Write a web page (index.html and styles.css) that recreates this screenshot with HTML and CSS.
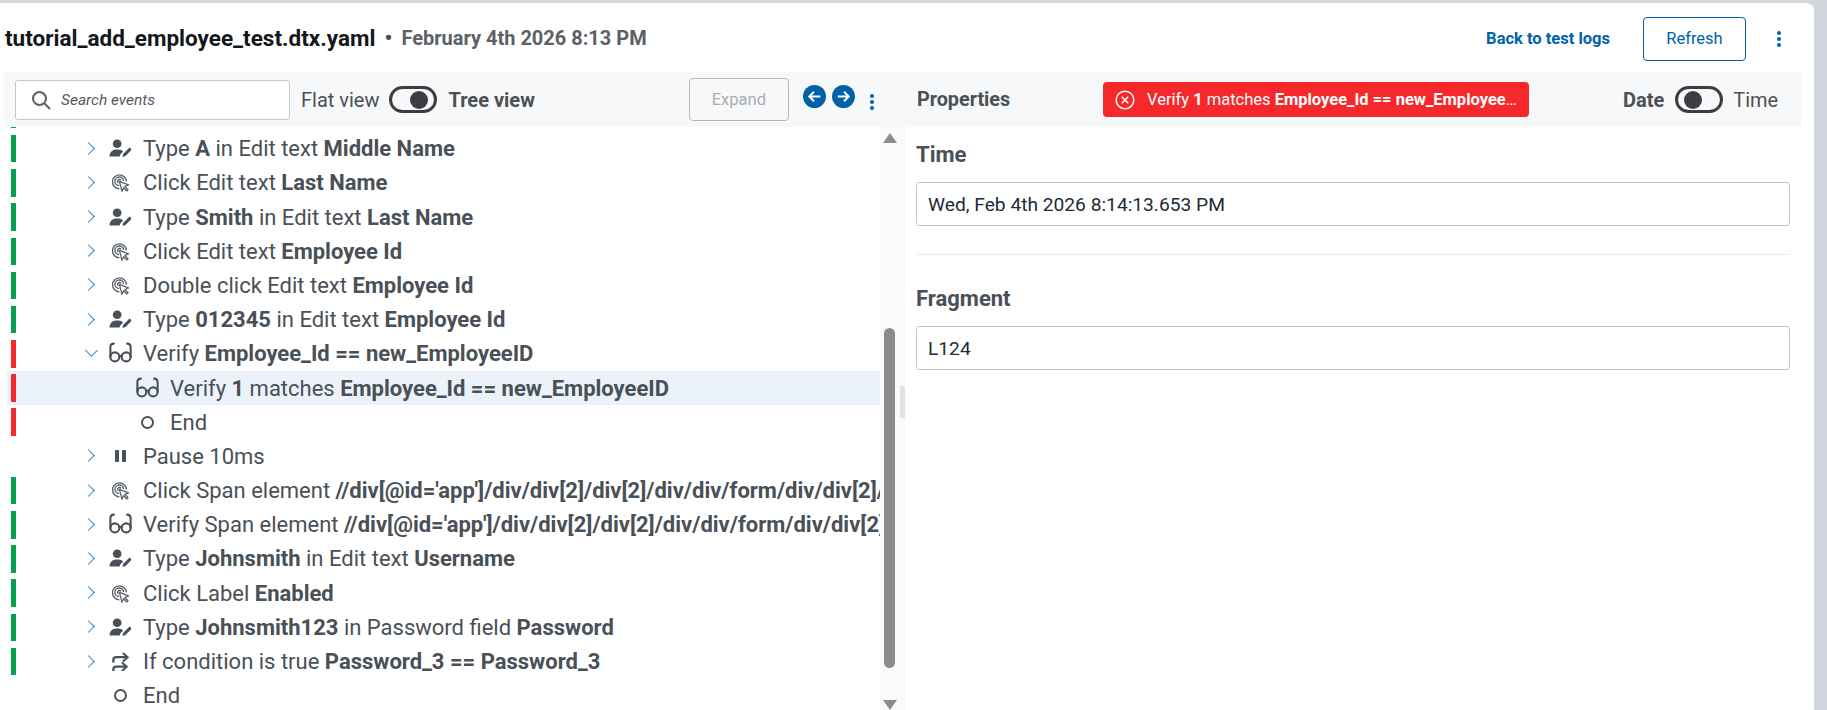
FILE: index.html
```html
<!DOCTYPE html>
<html lang="en">
<head>
<meta charset="utf-8">
<title>tutorial_add_employee_test.dtx.yaml</title>
<link rel="stylesheet" href="styles.css">
</head>
<body>
<svg class="defs" width="0" height="0" aria-hidden="true">
  <symbol id="i-type" viewBox="0 0 24 20">
    <circle cx="8.500" cy="5" r="4.600" fill="currentColor"/>
    <path d="M0.500 18.500c0-4.500 3-7.500 6.500-7.500h3c2 0 3.600.8 4.800 2.100l-2.800 2.900-1 2.500z" fill="currentColor"/>
    <path d="M14 18.800l.7-3 6-6.100c.5-.5 1.200-.5 1.700 0l.6.6c.5.5.5 1.200 0 1.700l-6 6.100z" fill="currentColor"/>
  </symbol>
  <symbol id="i-click" viewBox="0 0 18 18" fill="none" stroke="currentColor">
    <path d="M8 15A6.600 6.600 0 1 1 14.600 8" stroke-width="1.300"/>
    <path d="M7.700 12A4.100 4.100 0 1 1 11.900 7.600" stroke-width="1.300"/>
    <path d="M7 9.300A1.700 1.700 0 1 1 9.400 7" stroke-width="1.300"/>
    <path d="M8 8l8.600 3.300-3.500 1.500 3 3-1.200 1.200-3-3-1.500 3.400z" fill="#fff" stroke-width="1.200" stroke-linejoin="round"/>
  </symbol>
  <symbol id="i-glasses" viewBox="0 0 22 20" fill="none" stroke="currentColor" stroke-width="2" stroke-linecap="round">
    <circle cx="5.600" cy="14.200" r="4.300"/>
    <circle cx="16.400" cy="14.200" r="4.300"/>
    <path d="M9.800 13.500c.8-.5 1.600-.5 2.400 0M1.300 14V5c0-2 1-3.500 3.400-3.500M20.700 14V5c0-2-1-3.500-3.400-3.500"/>
  </symbol>
  <symbol id="i-flow" viewBox="0 0 20 20" fill="none" stroke="currentColor" stroke-width="2.400">
    <path d="M2.500 11V8.500c0-2 1-3 3-3H16"/>
    <path d="M2.500 20v-1.500c0-2 1-3 3-3H15"/>
    <path d="M12.500 1 17.500 5.500 12.500 10M11.500 11 16.500 15.500 11.500 20" stroke-width="2.200"/>
  </symbol>
</svg>
<main class="card">
  <header class="head">
    <div class="crumb">
      <h1 class="file">tutorial_add_employee_test.dtx.yaml</h1>
      <span class="dot">•</span>
      <span class="stamp">February 4th 2026 8:13 PM</span>
    </div>
    <div class="head-actions">
      <a class="back">Back to test logs</a>
      <button class="refresh">Refresh</button>
      <span class="kebab kebab-head"><i></i><i></i><i></i></span>
    </div>
  </header>

  <section class="bar">
    <div class="bar-left">
      <label class="search">
        <svg class="search-ic" viewBox="0 0 20 20" fill="none" stroke="#5f6368" stroke-width="2.100"><circle cx="8.500" cy="8.500" r="6.500"/><path d="M13.500 13.500 19 19"/></svg>
        <span class="search-ph">Search events</span>
      </label>
      <span class="opt">Flat view</span>
      <span class="toggle on"><i></i></span>
      <span class="opt strong">Tree view</span>
      <button class="expand">Expand</button>
      <span class="round"><svg viewBox="0 0 24 24" fill="none" stroke="#fff" stroke-width="2"><path d="M18 12H6.500M11.500 7l-5 5 5 5"/></svg></span>
      <span class="round"><svg viewBox="0 0 24 24" fill="none" stroke="#fff" stroke-width="2"><path d="M6 12h11.500M12.500 7l5 5-5 5"/></svg></span>
      <span class="kebab kebab-bar"><i></i><i></i><i></i></span>
    </div>
    <div class="bar-right">
      <span class="props">Properties</span>
      <div class="alert">
        <svg class="alert-ic" viewBox="0 0 20 20" fill="none" stroke="#fff" stroke-width="1.500"><circle cx="10" cy="10" r="8.800"/><path d="M6.800 6.800l6.400 6.400M13.200 6.800l-6.400 6.400"/></svg>
        <span class="alert-text">Verify <b>1</b> matches <b>Employee_Id == new_EmployeeID</b></span>
      </div>
      <span class="opt strong date">Date</span>
      <span class="toggle"><i></i></span>
      <span class="opt">Time</span>
    </div>
  </section>

  <div class="panes">
    <div class="tree-wrap">
      <div class="tree">
        <div class="stub"></div>
        <div class="row ok"><span class="mark"></span><span class="chev"></span><svg class="ic"><use href="#i-type"/></svg><span class="txt">Type <b>A</b> in Edit text <b>Middle Name</b></span></div>
        <div class="row ok"><span class="mark"></span><span class="chev"></span><svg class="ic ic-click"><use href="#i-click"/></svg><span class="txt">Click Edit text <b>Last Name</b></span></div>
        <div class="row ok"><span class="mark"></span><span class="chev"></span><svg class="ic"><use href="#i-type"/></svg><span class="txt">Type <b>Smith</b> in Edit text <b>Last Name</b></span></div>
        <div class="row ok"><span class="mark"></span><span class="chev"></span><svg class="ic ic-click"><use href="#i-click"/></svg><span class="txt">Click Edit text <b>Employee Id</b></span></div>
        <div class="row ok"><span class="mark"></span><span class="chev"></span><svg class="ic ic-click"><use href="#i-click"/></svg><span class="txt">Double click Edit text <b>Employee Id</b></span></div>
        <div class="row ok"><span class="mark"></span><span class="chev"></span><svg class="ic"><use href="#i-type"/></svg><span class="txt">Type <b>012345</b> in Edit text <b>Employee Id</b></span></div>
        <div class="row bad"><span class="mark"></span><span class="chev open"></span><svg class="ic ic-glass"><use href="#i-glasses"/></svg><span class="txt">Verify <b>Employee_Id == new_EmployeeID</b></span></div>
        <div class="row bad sel child"><span class="mark"></span><span class="chev none"></span><svg class="ic ic-glass"><use href="#i-glasses"/></svg><span class="txt">Verify <b>1</b> matches <b>Employee_Id == new_EmployeeID</b></span></div>
        <div class="row bad child"><span class="mark"></span><span class="chev none"></span><span class="ic ic-end"><i></i></span><span class="txt">End</span></div>
        <div class="row"><span class="mark"></span><span class="chev"></span><span class="ic ic-pause"><i></i><i></i></span><span class="txt">Pause 10ms</span></div>
        <div class="row ok"><span class="mark"></span><span class="chev"></span><svg class="ic ic-click"><use href="#i-click"/></svg><span class="txt">Click Span element <b>//div[@id='app']/div/div[2]/div[2]/div/div/form/div/div[2]/</b></span></div>
        <div class="row ok"><span class="mark"></span><span class="chev"></span><svg class="ic ic-glass"><use href="#i-glasses"/></svg><span class="txt">Verify Span element <b>//div[@id='app']/div/div[2]/div[2]/div/div/form/div/div[2]</b></span></div>
        <div class="row ok"><span class="mark"></span><span class="chev"></span><svg class="ic"><use href="#i-type"/></svg><span class="txt">Type <b>Johnsmith</b> in Edit text <b>Username</b></span></div>
        <div class="row ok"><span class="mark"></span><span class="chev"></span><svg class="ic ic-click"><use href="#i-click"/></svg><span class="txt">Click Label <b>Enabled</b></span></div>
        <div class="row ok"><span class="mark"></span><span class="chev"></span><svg class="ic"><use href="#i-type"/></svg><span class="txt">Type <b>Johnsmith123</b> in Password field <b>Password</b></span></div>
        <div class="row ok"><span class="mark"></span><span class="chev"></span><svg class="ic ic-flow"><use href="#i-flow"/></svg><span class="txt">If condition is true <b>Password_3 == Password_3</b></span></div>
        <div class="row"><span class="mark"></span><span class="chev none"></span><span class="ic ic-end"><i></i></span><span class="txt">End</span></div>
      </div>
      <div class="scroll">
        <span class="arrow up"></span>
        <span class="thumb"></span>
        <span class="arrow down"></span>
      </div>
    </div>
    <div class="split"><span class="grip"></span></div>
    <div class="detail">
      <h2 class="lbl">Time</h2>
      <div class="field">Wed, Feb 4th 2026 8:14:13.653 PM</div>
      <hr class="rule">
      <h2 class="lbl">Fragment</h2>
      <div class="field">L124</div>
    </div>
  </div>
</main>
</body>
</html>
```

FILE: styles.css
```css
* { box-sizing: border-box; }
html, body { margin: 0; height: 100%; }
body {
  background: #d2d7dd;
  padding: 3px 13px 0 0;
  height: 710px;
  overflow: hidden;
  font-family: Roboto, "Liberation Sans", sans-serif;
  color: #495057;
}
.defs { position: absolute; }
.card {
  background: #fff;
  height: 707px;
  border-top-right-radius: 8px;
  display: flex;
  flex-direction: column;
  overflow: hidden;
}
.head {
  height: 69px;
  flex: none;
  display: flex;
  align-items: center;
  justify-content: space-between;
  padding: 0 0 0 5px;
}
.crumb { display: flex; align-items: center; gap: 9px; }
.file { margin: 0; font-size: 22.500px; font-weight: 700; color: #14171a; }
.dot { font-size: 22px; color: #495057; font-weight: 700; }
.stamp { font-size: 20px; font-weight: 700; color: #5c6168; }
.head-actions { display: flex; align-items: center; margin-top: 2px; }
.back { font-size: 16.500px; font-weight: 700; color: #0062a8; margin-right: 33px; }
.refresh {
  width: 103px;
  height: 44px;
  background: #fff;
  border: 1px solid #0062a8;
  border-radius: 4px;
  color: #0062a8;
  font: 400 16.500px Roboto, sans-serif;
  margin-right: 31px;
}
.kebab { display: flex; flex-direction: column; gap: 2px; align-items: center; width: 4px; }
.kebab i { width: 4px; height: 4px; border-radius: 50%; background: #0062a8; display: block; }
.kebab-head { margin-right: 33px; }
.bar {
  height: 55px;
  flex: none;
  margin: 0 13px 0 4px;
  background: #f7f8fa;
  display: flex;
}
.bar-left { width: 901px; flex: none; display: flex; align-items: center; position: relative; padding-left: 11px; }
.search {
  width: 275px;
  height: 40px;
  background: #fff;
  border: 1px solid #c4c8cc;
  border-radius: 3px;
  display: flex;
  align-items: center;
  padding-left: 15px;
  margin-right: 11px;
  flex: none;
}
.search-ic { width: 20px; height: 20px; margin-right: 10px; }
.search-ph { font-style: italic; font-size: 15.500px; color: #55595f; }
.opt { font-size: 20px; color: #4d4f53; }
.opt.strong { font-weight: 700; }
.date { margin-right: 2px; }
.toggle {
  width: 48px;
  height: 27px;
  border: 3px solid #3b3d40;
  border-radius: 14px;
  display: flex;
  align-items: center;
  padding: 0 6px;
  margin: 0 10px 0 9px;
  flex: none;
}
.toggle.on { margin-right: 12px; justify-content: flex-end; }
.toggle i { width: 18px; height: 18px; background: #3b3d40; border-radius: 50%; display: block; }
.expand {
  width: 100px;
  height: 43px;
  background: transparent;
  border: 1px solid #b4b8bc;
  border-radius: 4px;
  color: #a9adb2;
  font: 400 16.500px Roboto, sans-serif;
  margin-left: 154px;
  margin-right: 14px;
}
.round { width: 23px; height: 23px; border-radius: 50%; background: #0062a8; margin: 0 6px 7px 0; flex: none; display: block; }
.round svg { width: 23px; height: 23px; display: block; }
.kebab-bar { margin: 5px 0 0 9px; }
.bar-right { flex: 1; display: flex; align-items: center; padding-left: 12px; }
.props { font-size: 19.800px; font-weight: 700; color: #495057; width: 186px; flex: none; }
.alert {
  width: 426px;
  height: 35px;
  background: #f7282c;
  border-radius: 4px;
  display: flex;
  align-items: center;
  padding: 0 12px 0 12px;
  color: #fff;
  font-size: 16.500px;
  flex: none;
  margin-right: 94px;
}
.alert-ic { width: 20px; height: 20px; flex: none; margin-right: 12px; }
.alert-text { white-space: nowrap; overflow: hidden; text-overflow: ellipsis; }
.panes { flex: 1; min-height: 0; display: flex; }
.tree-wrap { width: 900px; flex: none; display: flex; overflow: hidden; }
.tree { width: 880px; flex: none; overflow: hidden; padding-left: 7px; }
.stub { height: 4.600px; position: relative; }
.stub::before { content: ""; display: block; width: 5px; height: 1px; margin-left: 4px; background: #05a050; }
.row { height: 34.200px; display: flex; align-items: center; white-space: nowrap; }
.row.sel { background: #ebf2fa; }
.mark { width: 5px; height: 27.500px; margin-left: 4px; flex: none; }
.ok .mark { background: #05a050; }
.bad .mark { background: #f7282c; }
.chev { width: 7px; height: 12px; margin-left: 71px; margin-right: 15px; flex: none; position: relative; top: -1px; }
.chev::before {
  content: "";
  position: absolute;
  left: -3px; top: 2px;
  width: 8px; height: 8px;
  border-top: 1.500px solid #2f83c5;
  border-right: 1.500px solid #2f83c5;
  transform: rotate(45deg);
}
.chev.open::before { transform: rotate(135deg); left: 0; top: -1px; }
.chev.none::before { display: none; }
.child .chev { margin-right: 42px; }
.ic { width: 23px; height: 19px; flex: none; margin-right: 11px; color: #495057; display: block; }
.ic-click { color: #5a6068; }
.ic-glass { height: 21px; position: relative; top: -1px; }
.ic-end { display: flex; align-items: center; justify-content: center; }
.ic-end i { width: 13px; height: 13px; border: 2.500px solid #495057; border-radius: 50%; display: block; }
.ic-pause { display: flex; align-items: center; justify-content: center; gap: 3px; }
.ic-pause i { width: 4px; height: 12px; border-radius: 1px; background: #495057; display: block; }
.txt { font-size: 22px; color: #495057; }
.txt b { font-weight: 700; }
.scroll { width: 20px; flex: none; background: #fafafa; position: relative; }
.arrow { position: absolute; left: 3px; width: 0; height: 0; border-left: 7px solid transparent; border-right: 7px solid transparent; }
.arrow.up { top: 6px; border-bottom: 10px solid #8c8c8c; }
.arrow.down { top: 573px; border-top: 10px solid #8c8c8c; }
.thumb { position: absolute; left: 4px; top: 201px; width: 11px; height: 340px; background: #8c8c8c; border-radius: 6px; }
.split { width: 5px; flex: none; background: #f9fafa; position: relative; }
.grip { position: absolute; left: 0; top: 259px; width: 5px; height: 32px; background: #dfe2e6; }
.detail { flex: 1; padding: 14px 24px 0 11px; }
.lbl { margin: 0 0 13px; font-size: 22px; font-weight: 700; color: #495057; line-height: 28px; }
.field {
  height: 44px;
  border: 1px solid #c4c4c4;
  border-radius: 3px;
  display: flex;
  align-items: center;
  padding-left: 11px;
  font-size: 19.200px;
  color: #212b36;
}
.rule { border: 0; border-top: 1px solid #e9ebee; margin: 28px 0 30px; }
```
